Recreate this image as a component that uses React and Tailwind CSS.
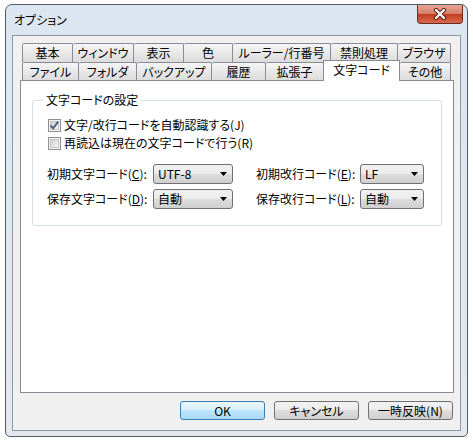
import React from "react";

const backRow = [
  { label: "基本", w: "w-[51px]" },
  { label: "ウィンドウ", w: "w-[61px]" },
  { label: "表示", w: "w-[50px]" },
  { label: "色", w: "w-[49px]" },
  { label: "ルーラー/行番号", w: "w-[98px]" },
  { label: "禁則処理", w: "w-[67px]" },
  { label: "ブラウザ", w: "w-[53px]" },
];

const frontRow = [
  { label: "ファイル", w: "w-[57px]" },
  { label: "フォルダ", w: "w-[58px]" },
  { label: "バックアップ", w: "w-[75px]" },
  { label: "履歴", w: "w-[54px]" },
  { label: "拡張子", w: "w-[58px]" },
  { label: "文字コード", w: "w-[77px]", selected: true },
  { label: "その他", w: "w-[51px]" },
];

function Tab({ label, w, first, selected }) {
  if (selected) {
    return (
      <div
        className={`relative z-10 -mt-[2px] -ml-px flex h-[21px] ${w} items-center justify-center border-x border-t border-[#898c95] bg-white pb-[2px]`}
      >
        {label}
      </div>
    );
  }
  return (
    <div
      className={`flex h-full ${w} items-center justify-center rounded-t-[2px] border-t border-r ${
        first ? "border-l" : ""
      } border-[#898c95] bg-linear-to-b from-[#f5f5f5] to-[#dcdcdc]`}
    >
      {label}
    </div>
  );
}

function Checkbox({ checked, children }) {
  return (
    <div className="flex h-[18px] items-center gap-[3px]">
      <div className="flex h-[13px] w-[13px] items-center justify-center border border-[#8e8f8f] bg-[#f4f4f4]">
        <div className="flex h-[9px] w-[9px] items-center justify-center border border-[#c6c6c6] bg-linear-to-br from-[#cfcfcf] to-[#f7f7f7]">
          {checked && (
            <svg width="11" height="11" viewBox="0 0 11 11" className="overflow-visible">
              <path d="M1.5 5.5 L4.2 8.3 L9.2 1.6" fill="none" stroke="#4a5e88" strokeWidth="1.9" />
            </svg>
          )}
        </div>
      </div>
      <span>{children}</span>
    </div>
  );
}

function Combo({ w, value }) {
  return (
    <div
      className={`flex h-[20px] ${w} items-center justify-between rounded-[3px] border border-[#707070] bg-[linear-gradient(#f2f2f2,#ebebeb_50%,#dddddd_50%,#cfcfcf)] pr-[5px] pl-[4px]`}
    >
      <span>{value}</span>
      <svg width="7" height="4" viewBox="0 0 7 4">
        <path d="M0 0 H7 L3.5 4 Z" fill="#000" />
      </svg>
    </div>
  );
}

function Button({ children, primary }) {
  return (
    <button
      type="button"
      className={`flex h-[19px] w-[85px] items-center justify-center rounded-[3px] border ${
        primary
          ? "border-[#3c7fb1] bg-[linear-gradient(#eaf6fd,#d9f0fc_50%,#bee6fd_50%,#a7d9f5)]"
          : "border-[#707070] bg-[linear-gradient(#f2f2f2,#ebebeb_50%,#dddddd_50%,#cfcfcf)]"
      }`}
    >
      {children}
    </button>
  );
}

export default function App() {
  return (
    <div className="h-[441px] w-[473px] bg-white pt-[4px] pl-[5px] font-['Noto_Sans_CJK_JP',sans-serif] text-[12px] leading-[16px] text-black [font-feature-settings:'palt']">
      {/* window frame */}
      <div className="flex h-[433px] w-[463px] flex-col rounded-t-[7px] rounded-b-[5px] border border-[#555b63] bg-linear-to-b from-[#dce6f0] to-[#e4e9ef] px-[6px] pb-[5px]">
        {/* title bar */}
        <div className="flex h-[30px] items-start justify-between pl-[2px]">
          <span className="mt-[7px] text-[12px] leading-[16px]">オプション</span>
          <div className="-mr-[2px] flex h-[19px] w-[46px] items-center justify-center rounded-b-[4px] border border-t-0 border-[#6d2a1d] bg-[linear-gradient(#e8a595,#d67c67_50%,#c23b20_50%,#d86a4d)]">
            <svg width="14" height="12" viewBox="0 0 14 12">
              <path d="M3 2 L11 10 M11 2 L3 10" stroke="#5b2318" strokeWidth="4.2" strokeLinecap="round" />
              <path d="M3 2 L11 10 M11 2 L3 10" stroke="#ffffff" strokeWidth="2.2" strokeLinecap="round" />
            </svg>
          </div>
        </div>

        {/* client area */}
        <div className="flex flex-1 flex-col border border-[#8d99a6] bg-[#f0f0f0] px-[7px] pt-[7px]">
          {/* tabs back row */}
          <div className="ml-[2px] flex h-[19px]">
            {backRow.map((t, i) => (
              <Tab key={t.label} label={t.label} w={t.w} first={i === 0} />
            ))}
          </div>
          {/* tabs front row */}
          <div className="ml-[2px] flex h-[18px] items-start">
            {frontRow.map((t, i) => (
              <Tab key={t.label} label={t.label} w={t.w} first={i === 0} selected={t.selected} />
            ))}
          </div>

          {/* tab page */}
          <div className="h-[313px] w-[434px] border border-[#898c95] bg-white pt-[11px]">
            <fieldset className="mx-[11px] h-[134px] rounded-[3px] border border-[#d5dfe5] pr-[10px] pl-[14px]">
              <legend className="-ml-[4px] px-[3px]">文字コードの設定</legend>
              <div className="mt-[8px] ml-[1px]">
                <Checkbox checked>文字/改行コードを自動認識する(J)</Checkbox>
                <Checkbox>再読込は現在の文字コードで行う(R)</Checkbox>
              </div>
              <div className="mt-[12px] flex flex-col gap-[5px]">
                <div className="flex items-center">
                  <span className="w-[106px]">
                    初期文字コード(<span className="underline">C</span>):
                  </span>
                  <Combo w="w-[80px]" value="UTF-8" />
                  <span className="ml-[23px] w-[104px]">
                    初期改行コード(<span className="underline">E</span>):
                  </span>
                  <Combo w="w-[64px]" value="LF" />
                </div>
                <div className="flex items-center">
                  <span className="w-[106px]">
                    保存文字コード(<span className="underline">D</span>):
                  </span>
                  <Combo w="w-[80px]" value="自動" />
                  <span className="ml-[23px] w-[104px]">
                    保存改行コード(<span className="underline">L</span>):
                  </span>
                  <Combo w="w-[64px]" value="自動" />
                </div>
              </div>
            </fieldset>
          </div>

          {/* dialog buttons */}
          <div className="mt-[8px] flex justify-end gap-[9px]">
            <Button primary>OK</Button>
            <Button>キャンセル</Button>
            <Button>一時反映(N)</Button>
          </div>
        </div>
      </div>
    </div>
  );
}
